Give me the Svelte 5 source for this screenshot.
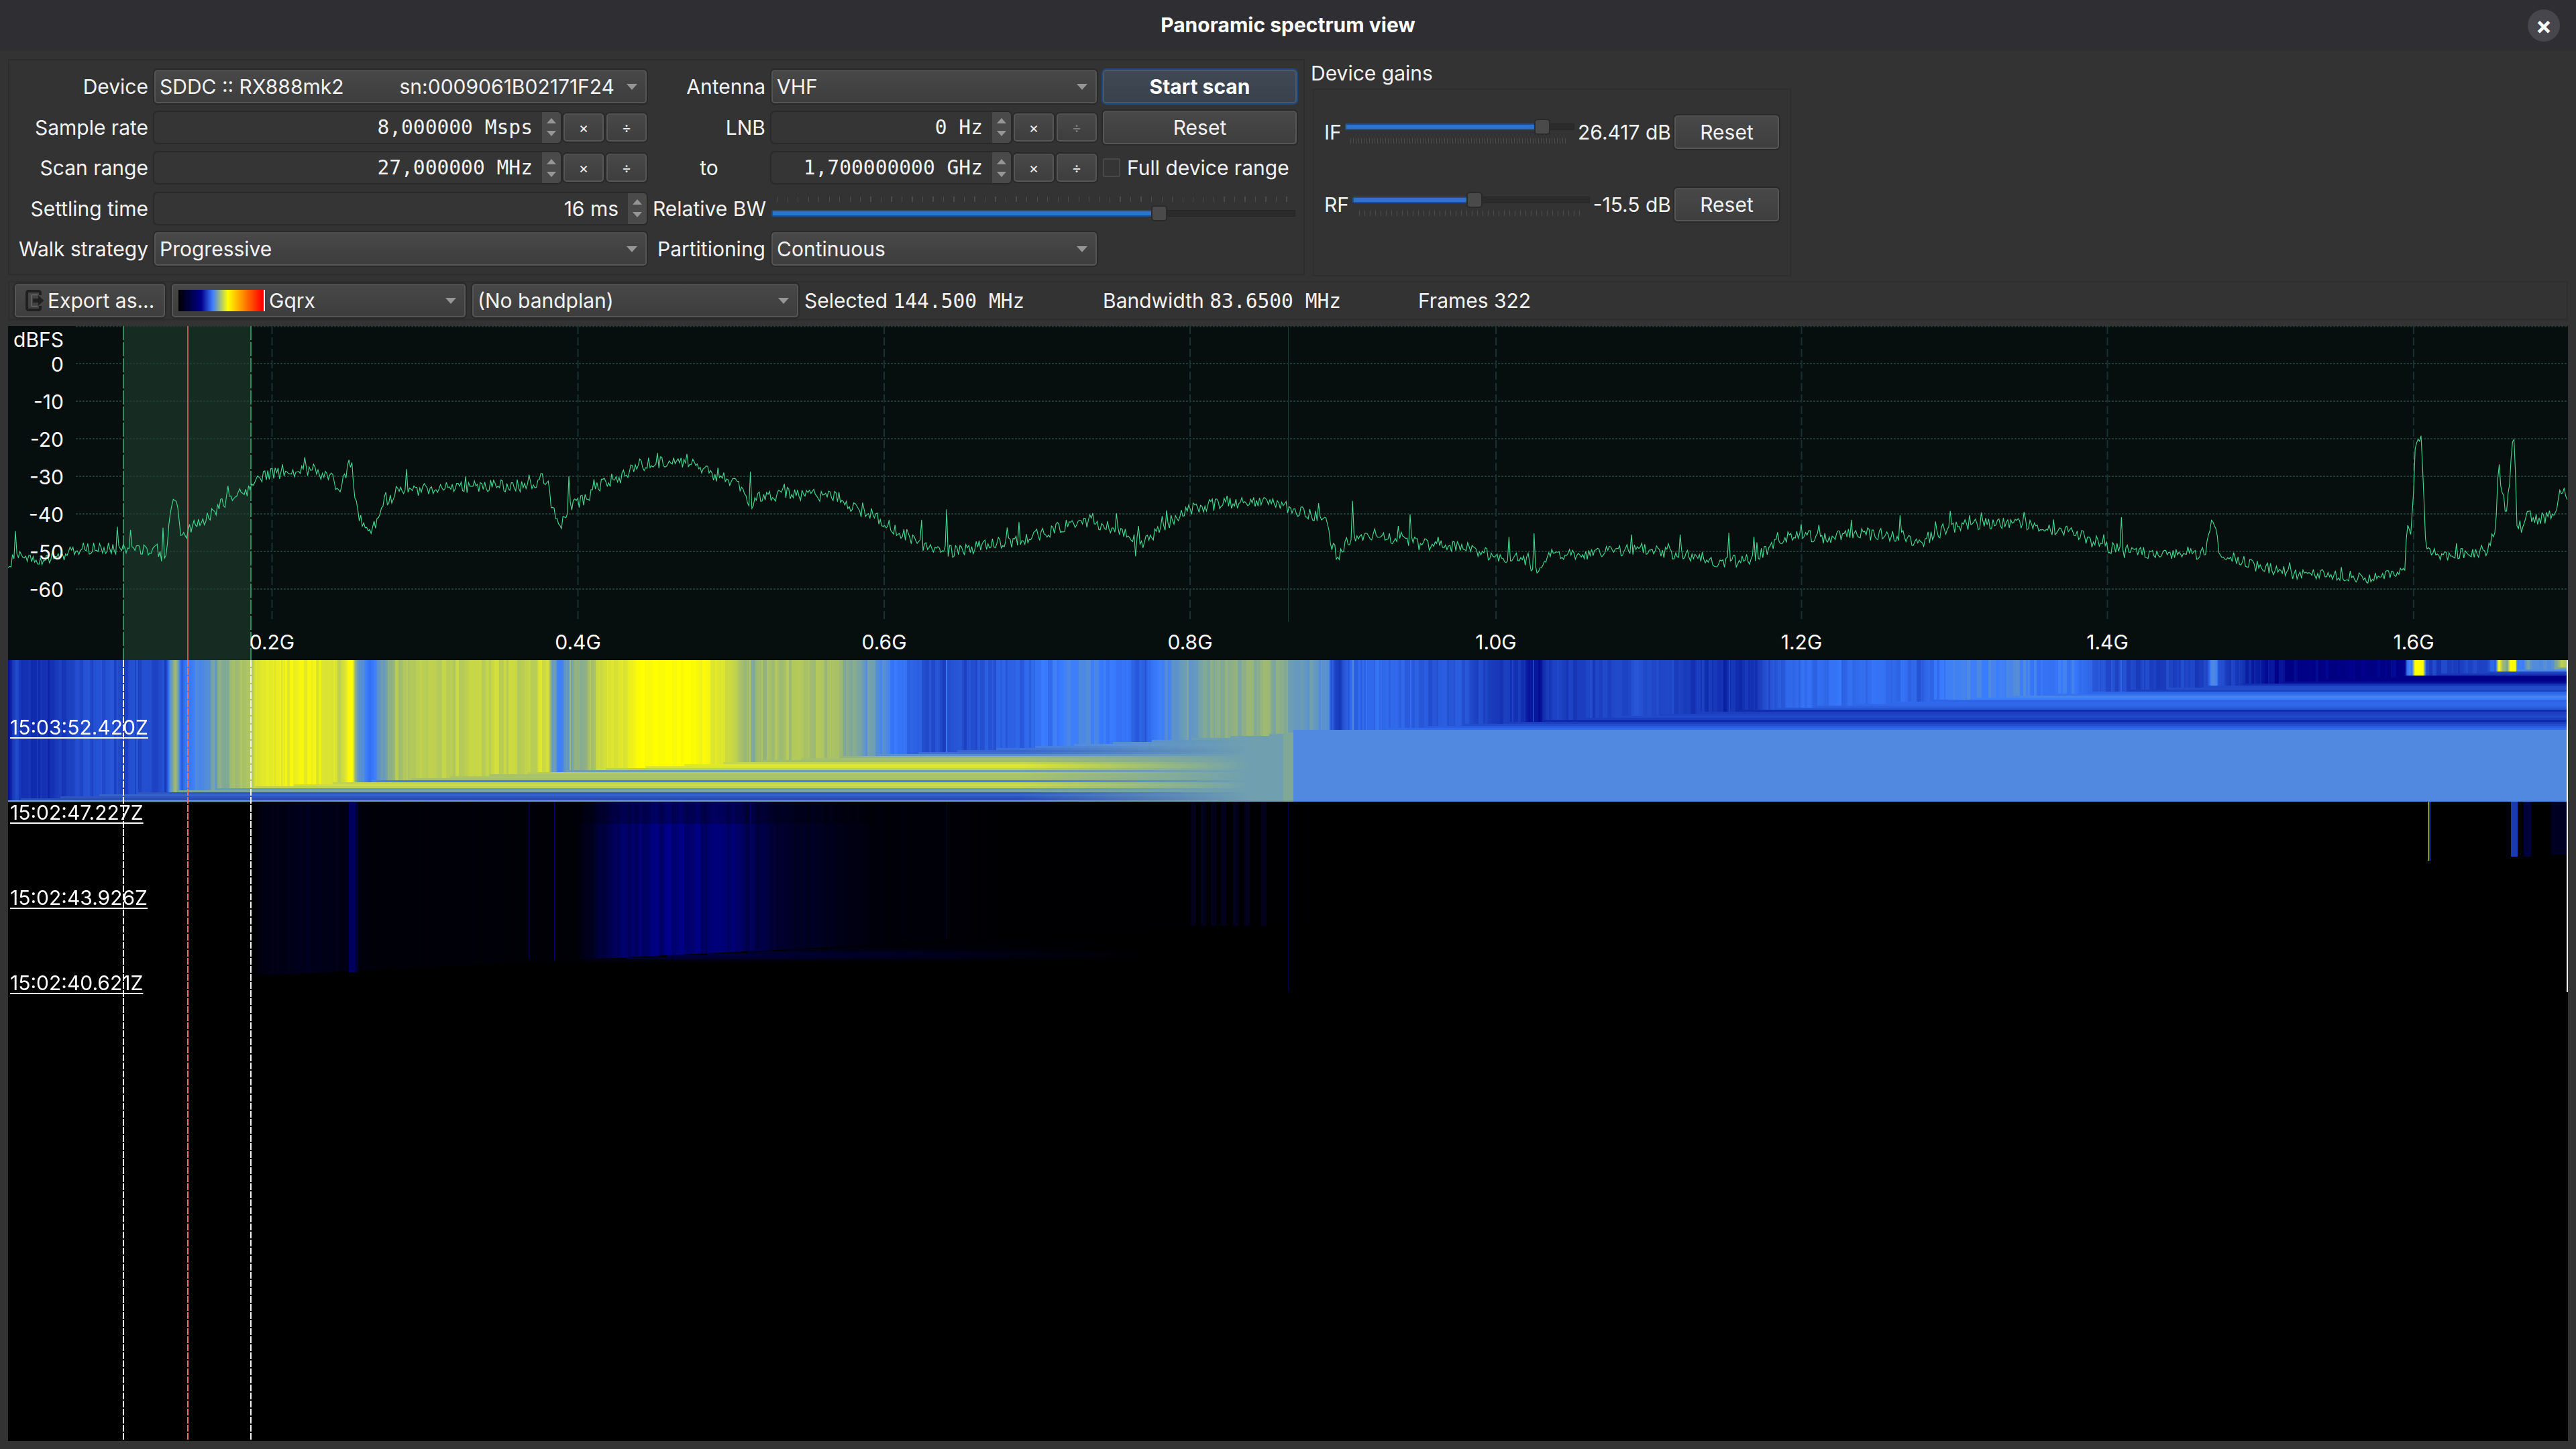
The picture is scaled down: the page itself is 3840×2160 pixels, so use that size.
<script lang="ts">
    import { onMount } from "svelte";

    let canvas: HTMLCanvasElement;

    // seeded, so the noise stays the same between runs
    function rng(seed: number) {
        return () => {
            seed = (seed + 0x6d2b79f5) | 0;
            let t = Math.imul(seed ^ (seed >>> 15), 1 | seed);
            t = (t + Math.imul(t ^ (t >>> 7), 61 | t)) ^ t;
            return ((t ^ (t >>> 14)) >>> 0) / 4294967296;
        };
    }

    const PLOT_L = 12;
    const PLOT_R = 3827;
    const PLOT_T = 486;
    const WF_T = 984;
    const WF_MID = 1195;
    const WF_B = 2148;

    const seg = (x0: number, sx: number, pts: number[][]) =>
        pts.map(([x, y]) => [x0 + x / sx, 480 + y / 3]);

    // rough outline of the power trace, full-size pixels
    const knots = [
        ...seg(0, 1.206, [
            [14, 1100], [28, 1040], [60, 1060], [90, 1070], [120, 1040], [150, 1010], [220, 1020], [280, 1020],
            [298, 1030], [306, 860], [315, 790], [320, 860], [326, 980], [340, 920], [370, 880], [400, 810],
            [430, 770], [452, 750], [465, 690], [500, 680], [540, 660], [580, 680], [600, 710], [610, 745],
            [625, 660], [633, 625], [638, 780], [645, 860], [665, 950], [680, 880], [695, 810], [710, 770],
            [730, 750], [780, 750], [850, 735], [900, 730], [960, 735], [975, 700], [985, 700], [990, 820],
            [1005, 910], [1015, 890], [1025, 830], [1050, 790], [1085, 720], [1120, 690], [1150, 640],
            [1185, 625], [1240, 625], [1280, 680], [1320, 720], [1340, 770], [1350, 810], [1365, 780],
            [1420, 770], [1460, 770], [1510, 790], [1540, 840],
        ]),
        ...seg(1300, 1.206, [
            [0, 860], [20, 890], [60, 960], [90, 1000], [130, 1030], [180, 1010], [220, 990], [260, 980],
            [300, 950], [350, 910], [400, 900], [440, 930], [470, 970], [490, 990], [520, 920], [560, 850],
            [600, 820], [650, 810], [700, 800], [750, 830], [800, 870], [820, 900], [825, 990], [840, 1060],
            [855, 980], [868, 960], [900, 950], [950, 975], [1000, 1000], [1060, 1000], [1110, 1040],
            [1170, 1055], [1190, 1105], [1200, 1110], [1220, 1040], [1260, 1040], [1310, 1030], [1370, 1015],
            [1430, 1030], [1480, 1050], [1530, 1075],
        ]),
        ...seg(2600, 1.2645, [
            [0, 1065], [30, 1040], [60, 990], [100, 950], [150, 965], [200, 945], [250, 950], [300, 960],
            [330, 985], [380, 925], [430, 905], [520, 900], [560, 930], [620, 925], [650, 980], [690, 1010],
            [730, 1035], [800, 1030], [870, 1035], [880, 900], [890, 900], [895, 1030], [920, 1050],
            [960, 1085], [1030, 1125], [1100, 1135], [1190, 1140], [1245, 1120], [1250, 920], [1258, 930],
            [1265, 580], [1276, 490], [1280, 700], [1285, 1020], [1300, 1040], [1350, 1040], [1400, 1020],
            [1408, 970], [1416, 960], [1422, 620], [1428, 770], [1438, 850], [1446, 600], [1452, 500],
            [1456, 910], [1468, 920], [1478, 810], [1485, 890], [1495, 880], [1525, 870], [1540, 745],
            [1552, 780],
        ]),
    ];

    // single-sample spikes that also leave a line in the waterfall
    const spikes = [
        ...seg(0, 1.206, [[28, 935], [210, 915], [236, 930], [292, 920], [732, 658], [1024, 690], [1182, 585], [1235, 590], [1348, 670]]),
        ...seg(1300, 1.206, [[88, 885], [133, 838], [264, 895], [397, 855], [440, 855], [529, 842], [864, 800], [968, 860], [1145, 960], [1189, 945], [1365, 950], [1454, 950], [1541, 942]]),
        ...seg(2600, 1.2645, [[18, 960], [64, 940], [108, 905], [203, 885], [295, 865], [388, 845], [527, 850], [710, 873], [1028, 1075]]),
    ];
    const spikeDips = [
        ...seg(0, 1.206, [[290, 1070], [1348, 872]]),
        ...seg(1300, 1.206, [[475, 1048]]),
    ];

    function base(x: number) {
        if (x <= knots[0][0]) return knots[0][1];
        for (let i = 1; i < knots.length; i++) {
            if (x <= knots[i][0]) {
                const [x0, y0] = knots[i - 1];
                const [x1, y1] = knots[i];
                return y0 + ((y1 - y0) * (x - x0)) / (x1 - x0);
            }
        }
        return knots[knots.length - 1][1];
    }

    function buildTrace() {
        const r = rng(11);
        const pts: string[] = [];
        const marks = [...spikes, ...spikeDips];
        for (let x = PLOT_L; x <= PLOT_R; x += 2.2) {
            let y = base(x) + (r() - 0.5) * 19;
            if (r() < 0.05) y -= r() * 16;
            const hit = marks.find((m) => Math.abs(m[0] - x) < 1.1);
            if (hit) y = hit[1];
            pts.push(`${x.toFixed(1)},${y.toFixed(1)}`);
        }
        return pts.join(" ");
    }
    const trace = buildTrace();

    const dbLines = [
        { label: "0", y: 542 },
        { label: "-10", y: 598 },
        { label: "-20", y: 654 },
        { label: "-30", y: 710 },
        { label: "-40", y: 766 },
        { label: "-50", y: 822 },
        { label: "-60", y: 878 },
    ];
    const freqLines = [
        { label: "0.2G", x: 405.5 },
        { label: "0.4G", x: 861.5 },
        { label: "0.6G", x: 1318 },
        { label: "0.8G", x: 1774 },
        { label: "1.0G", x: 2230 },
        { label: "1.2G", x: 2685.5 },
        { label: "1.4G", x: 3141.5 },
        { label: "1.6G", x: 3598 },
    ];
    const stamps = [
        { text: "15:03:52.420Z", y: 1067 },
        { text: "15:02:47.227Z", y: 1194 },
        { text: "15:02:43.926Z", y: 1321 },
        { text: "15:02:40.621Z", y: 1448 },
    ];

    type RGB = [number, number, number];
    const mix = (a: RGB, b: RGB, t: number): RGB => [
        a[0] + (b[0] - a[0]) * t,
        a[1] + (b[1] - a[1]) * t,
        a[2] + (b[2] - a[2]) * t,
    ];
    const css = (c: RGB) => `rgb(${c[0] | 0},${c[1] | 0},${c[2] | 0})`;

    // trace height on screen -> waterfall colour
    const stops: [number, RGB][] = [
        [688, [255, 255, 0]],
        [700, [244, 244, 24]],
        [722, [200, 216, 70]],
        [745, [150, 180, 125]],
        [760, [112, 160, 176]],
        [788, [58, 124, 255]],
        [822, [32, 72, 200]],
        [840, [14, 40, 170]],
        [855, [0, 0, 139]],
        [880, [0, 0, 110]],
    ];
    function colourAt(y: number): RGB {
        if (y <= stops[0][0]) return stops[0][1];
        for (let i = 1; i < stops.length; i++) {
            if (y <= stops[i][0]) {
                const t = (y - stops[i - 1][0]) / (stops[i][0] - stops[i - 1][0]);
                return mix(stops[i - 1][1], stops[i][1], t);
            }
        }
        return stops[stops.length - 1][1];
    }

    const SLOPE = 0.0516;
    const front = (x: number) => 1192 - (x - PLOT_L) * SLOPE;
    const frontInv = (y: number) => PLOT_L + (1192 - y) / SLOPE;

    // brightness of the older, dim sweep
    const dimKnots = [
        [374, 0], [392, 0.16], [470, 0.24], [525, 0.16], [560, 0.07], [860, 0.06], [880, 0.3], [930, 0.85],
        [1000, 1], [1100, 0.85], [1150, 0.42], [1250, 0.2], [1300, 0.1], [1500, 0.03], [1900, 0.02], [2100, 0],
    ];
    function dim(x: number) {
        for (let i = 1; i < dimKnots.length; i++) {
            if (x <= dimKnots[i][0]) {
                const [x0, y0] = dimKnots[i - 1];
                const [x1, y1] = dimKnots[i];
                return x < x0 ? 0 : y0 + ((y1 - y0) * (x - x0)) / (x1 - x0);
            }
        }
        return 0;
    }

    function drawWaterfall() {
        const ctx = canvas.getContext("2d")!;
        const r = rng(5);
        ctx.fillStyle = "#000";
        ctx.fillRect(0, 0, canvas.width, canvas.height);
        const rect = (x0: number, y0: number, x1: number, y1: number, c: RGB | string) => {
            ctx.fillStyle = typeof c === "string" ? c : css(c);
            ctx.fillRect(x0 - PLOT_L, y0 - WF_T, x1 - x0, y1 - y0);
        };

        // newest sweep: stripes above the slanted front
        const cols: RGB[] = [];
        let stripe = 0;
        let left = 0;
        for (let x = PLOT_L; x <= PLOT_R; x++) {
            if (left-- <= 0) {
                stripe = (r() - 0.5) * 15;
                left = 1 + Math.floor(r() * 6);
            }
            let v = base(x) + stripe;
            const hit = spikes.find((m) => Math.abs(m[0] - x) < 1);
            if (hit) v = Math.min(v, hit[1] + 30);
            cols.push(colourAt(v));
            rect(x, WF_T, x + 1, Math.round(front(x)) + 4, cols[x - PLOT_L]);
        }

        // below the front each row keeps the colour of where the front crossed it
        const faded: RGB = [112, 160, 176];
        for (let y = 995; y < WF_MID; y += 3) {
            const fx = Math.max(PLOT_L, Math.round(frontInv(y + 1)));
            const c = cols[Math.min(fx, PLOT_R) - PLOT_L];
            if (y < 1088) {
                rect(fx, y, PLOT_R + 1, y + 3, c);
                continue;
            }
            for (let x = fx; x < 1913; x += 6) {
                const t = Math.min(1, Math.max(0.22, (x - 1420) / 440));
                rect(x, y, x + 6, y + 3, mix(c, faded, t));
            }
        }
        rect(1913, 1092, 1928, WF_MID, "#7fa896");
        rect(1928, 1088, PLOT_R + 1, WF_MID, "#5289e0");
        rect(PLOT_L, 1193, 1913, WF_MID, "#6f9fb4");

        // older sweep, almost black
        const navy: RGB = [0, 0, 139];
        const low = (x: number) => 1455 - (x - 374) * 0.05;
        const black: RGB = [0, 0, 0];
        left = 0;
        for (let x = 374; x < 2100; x++) {
            if (left-- <= 0) {
                stripe = 0.72 + r() * 0.28;
                left = 1 + Math.floor(r() * 7);
            }
            const lv = dim(x) * stripe;
            const ylow = low(x);
            rect(x, WF_MID, x + 1, 1228, mix(black, navy, lv * (x > 860 && x < 1300 ? 0.75 : 1)));
            rect(x, 1228, x + 1, ylow, mix(black, navy, lv));
        }
        for (let y = 1400; y < 1435; y += 3) {
            const fx = 374 + (1455 - y) / 0.05;
            const c = dim(fx) * 0.45;
            for (let x = fx; x < 1720; x += 6) {
                const t = Math.max(0, 1 - (x - fx) / (1720 - fx));
                rect(x, y, x + 6, y + 3, mix(black, navy, c * t + 0.02 * t));
            }
        }

        // a few lone channels
        rect(520, WF_MID, 530, 1449, [0, 0, 92]);
        rect(530, WF_MID, 534, 1449, [0, 0, 50]);
        rect(788, WF_MID, 790, 1430, [0, 0, 70]);
        rect(826, WF_MID, 827, 1432, [0, 0, 110]);
        rect(1118, WF_MID, 1120, 1415, [0, 0, 110]);
        rect(1411, WF_MID, 1412, 1400, [0, 0, 80]);
        for (const sx of [1775, 1790, 1805, 1820, 1838, 1855, 1880]) {
            rect(sx, WF_MID, sx + 8, 1380, [2, 2, 28]);
        }
        rect(1920, WF_MID, 1921, 1478, [0, 0, 70]);
        rect(3620, WF_MID, 3621, 1283, "#c8d860");
        rect(3621, WF_MID, 3623, 1283, "#1a3ab0");
        rect(3743, WF_MID, 3753, 1277, "#1a3ab0");
        rect(3762, WF_MID, 3773, 1277, [0, 0, 60]);
        rect(3803, WF_MID, PLOT_R + 1, 1274, [0, 0, 34]);
        rect(PLOT_R - 1, WF_T, PLOT_R + 1, 1479, "#f4f4f4");
    }

    onMount(drawWaterfall);
</script>

{#snippet arrow()}
    <i class="arrow"></i>
{/snippet}

{#snippet spin(text: string, mono = true)}
    <div class="spin">
        <span class="value" class:mono>{text}</span>
        <div class="stepper">
            <i class="tri up"></i>
            <i class="tri"></i>
        </div>
    </div>
{/snippet}

{#snippet spinRow(text: string, divOff = false)}
    <div class="field">
        {@render spin(text)}
        <button class="btn small">×</button>
        <button class="btn small" class:off={divOff}>÷</button>
    </div>
{/snippet}

{#snippet slider(pct: number, ticks: string)}
    <div class="slider {ticks}">
        <div class="groove">
            <div class="fill" style="width: {pct}%"></div>
            <div class="handle" style="left: {pct}%"></div>
        </div>
        <div class="ticks"></div>
    </div>
{/snippet}

<div class="window">
    <header class="titlebar">
        <span class="title">Panoramic spectrum view</span>
        <button class="close">×</button>
    </header>

    <div class="content">
        <div class="top">
            <section class="form">
                <label>Device</label>
                <div class="combo">
                    <span>SDDC :: RX888mk2</span>
                    <span class="serial">sn:0009061B02171F24</span>
                    {@render arrow()}
                </div>
                <label>Antenna</label>
                <div class="combo"><span>VHF</span>{@render arrow()}</div>
                <button class="btn primary">Start scan</button>

                <label>Sample rate</label>
                {@render spinRow("8,000000 Msps")}
                <label>LNB</label>
                {@render spinRow("0 Hz", true)}
                <button class="btn">Reset</button>

                <label>Scan range</label>
                {@render spinRow("27,000000 MHz")}
                <label class="center">to</label>
                {@render spinRow("1,700000000 GHz")}
                <div class="check"><i class="box"></i>Full device range</div>

                <label>Settling time</label>
                {@render spin("16 ms", false)}
                <label>Relative BW</label>
                <div class="wide">{@render slider(74, "ticks-top")}</div>

                <label>Walk strategy</label>
                <div class="combo"><span>Progressive</span>{@render arrow()}</div>
                <label>Partitioning</label>
                <div class="combo"><span>Continuous</span>{@render arrow()}</div>
            </section>

            <section class="gains">
                <div class="gains-title">Device gains</div>
                <div class="gains-frame">
                    <div class="gain">
                        <span>IF</span>
                        {@render slider(86, "ticks-fine")}
                        <span class="db">26.417 dB</span>
                        <button class="btn reset">Reset</button>
                    </div>
                    <div class="gain">
                        <span>RF</span>
                        {@render slider(51.5, "ticks-mid")}
                        <span class="db">-15.5 dB</span>
                        <button class="btn reset">Reset</button>
                    </div>
                </div>
            </section>
        </div>

        <div class="toolbar">
            <button class="btn export">
                <svg viewBox="0 0 28 32" width="28" height="32">
                    <path d="M22 8V4.500A2.500 2.500 0 0 0 19.500 2h-15A2.500 2.500 0 0 0 2 4.500v23A2.500 2.500 0 0 0 4.500 30h15a2.500 2.500 0 0 0 2.500-2.500V24" fill="none" stroke="#1f1f1f" stroke-width="4" />
                    <path d="M9 7.500h9M9 24.500h9M9 7.500v17" fill="none" stroke="#666" stroke-width="1.500" />
                    <path d="M11 13h8V8.500L27.500 16 19 23.500V19h-8z" fill="#1f1f1f" />
                </svg>
                Export as...
            </button>
            <div class="combo palette">
                <i class="ramp"></i><span>Gqrx</span>{@render arrow()}
            </div>
            <div class="combo bandplan"><span>(No bandplan)</span>{@render arrow()}</div>
            <div class="stat selected">Selected <span class="mono">144.500 MHz</span></div>
            <div class="stat bandwidth">Bandwidth <span class="mono">83.6500 MHz</span></div>
            <div class="stat frames">Frames 322</div>
        </div>

        <div class="plot">
            <svg class="spectrum" viewBox="12 486 3816 498" width="3816" height="498">
                <rect x="184" y="486" width="190" height="498" fill="#162c22" />
                <line x1="113" y1="486.500" x2="3828" y2="486.500" class="grid-h" />
                {#each dbLines as d}
                    <line x1="113" y1={d.y} x2="3828" y2={d.y} class="grid-h" />
                {/each}
                {#each freqLines as f}
                    <line x1={f.x} y1="486" x2={f.x} y2="927" class="grid-v" />
                {/each}
                <line x1="1920.500" y1="486" x2="1920.500" y2="927" stroke="#1b3a36" stroke-width="1" />
                <line x1="184" y1="486" x2="184" y2="984" class="edge" />
                <line x1="374" y1="486" x2="374" y2="984" class="edge" />
                <line x1="280" y1="486" x2="280" y2="984" stroke="#f07068" stroke-width="1.500" />
                <polyline points={trace} fill="none" stroke="#40d890" stroke-width="1.150" />
            </svg>
            <canvas bind:this={canvas} class="waterfall" width="3816" height={WF_B - WF_T}></canvas>
            <svg class="cursors" viewBox="12 984 3816 1164" width="3816" height="1164">
                <line x1="184" y1="984" x2="184" y2="2148" class="cut" />
                <line x1="374" y1="984" x2="374" y2="2148" class="cut" />
                <line x1="280" y1="984" x2="280" y2="2148" class="cut red" />
            </svg>

            <span class="axis-unit">dBFS</span>
            {#each dbLines as d}
                <span class="axis-y" style="top: {d.y - PLOT_T - 16}px">{d.label}</span>
            {/each}
            {#each freqLines as f}
                <span class="axis-x" style="left: {f.x - PLOT_L}px">{f.label}</span>
            {/each}
            {#each stamps as s}
                <span class="stamp" style="top: {s.y - PLOT_T}px">{s.text}</span>
            {/each}
        </div>
    </div>
</div>

<style>
    :global(body) {
        margin: 0;
        background: #333333;
    }

    .window {
        width: 3840px;
        height: 2160px;
        display: flex;
        flex-direction: column;
        overflow: hidden;
        background: #333333;
        color: #f2f2f2;
        font-family: Inter, "Noto Sans", sans-serif;
        font-size: 30px;
    }

    /* Title bar. */
    .titlebar {
        position: relative;
        flex: none;
        box-sizing: border-box;
        height: 76px;
        padding-bottom: 2px;
        display: flex;
        align-items: center;
        justify-content: center;
        background: #2f2f33;
    }
    .title {
        font-weight: 700;
        color: #fff;
    }
    .close {
        position: absolute;
        right: 24px;
        top: 14px;
        width: 48px;
        height: 48px;
        padding: 0;
        border: 0;
        border-radius: 50%;
        background: #46464c;
        color: #fff;
        font: 700 36px/46px Inter, sans-serif;
    }

    .content {
        flex: 1;
        min-height: 0;
        display: flex;
        flex-direction: column;
        padding: 12px 12px 12px;
    }

    .top {
        flex: none;
        display: flex;
        height: 322px;
        gap: 8px;
    }

    /* Main parameter form. */
    .form {
        width: 1933px;
        box-sizing: border-box;
        border: 2px solid #2c2c2c;
        display: grid;
        grid-template-columns: 207px 734px 168px 485px 289px;
        grid-auto-rows: 60.5px;
        column-gap: 9px;
        align-items: center;
        padding-top: 9px;
    }
    label {
        text-align: right;
        white-space: nowrap;
    }
    label.center {
        text-align: center;
        padding-left: 0;
    }

    .field {
        display: flex;
        align-items: center;
        gap: 4px;
    }
    .wide {
        grid-column: span 2;
        margin-top: -6px;
    }

    .combo {
        box-sizing: border-box;
        height: 50px;
        display: flex;
        align-items: center;
        padding: 0 12px 0 6px;
        border: 2px solid #555555;
        border-top-color: #4f4f4f;
        border-radius: 5px;
        background: linear-gradient(#484848, #3d3d3d);
        box-shadow: 0 0 0 2px #292929;
        white-space: nowrap;
    }
    .serial {
        margin-left: auto;
        margin-right: 18px;
    }
    .arrow {
        margin-left: auto;
        width: 0;
        height: 0;
        border-left: 8px solid transparent;
        border-right: 8px solid transparent;
        border-top: 9px solid #969696;
    }
    .serial + .arrow {
        margin-left: 0;
    }

    .spin {
        flex: 1;
        box-sizing: border-box;
        height: 46px;
        display: flex;
        align-items: stretch;
        border-radius: 5px;
        background: #353535;
        box-shadow: 0 0 0 2px #292929;
    }
    .value {
        flex: 1;
        display: flex;
        align-items: center;
        justify-content: flex-end;
        padding-right: 14px;
        white-space: pre;
    }
    .mono {
        font-family: "DejaVu Sans Mono", monospace;
        font-size: 29.600px;
        white-space: pre;
    }
    .stepper {
        width: 28px;
        flex: none;
        display: flex;
        flex-direction: column;
        align-items: center;
        justify-content: center;
        gap: 11px;
        background: #4a4a4a;
        border-radius: 0 5px 5px 0;
    }
    .tri {
        width: 0;
        height: 0;
        border-left: 7px solid transparent;
        border-right: 7px solid transparent;
        border-top: 8px solid #969696;
    }
    .tri.up {
        border-top: 0;
        border-bottom: 8px solid #969696;
    }

    .btn {
        box-sizing: border-box;
        height: 50px;
        padding: 0;
        border: 2px solid #565656;
        border-top-color: #4f4f4f;
        border-radius: 5px;
        background: linear-gradient(#484848, #3e3e3e);
        box-shadow: 0 0 0 2px #292929;
        color: inherit;
        font: inherit;
    }
    .btn.small {
        flex: none;
        width: 60px;
        height: 42px;
        font-size: 22px;
    }
    .btn.off {
        color: #808080;
    }
    .btn.primary {
        height: 50px;
        font-weight: 700;
        color: #fff;
        background: linear-gradient(#404853, #38414c);
        border-color: #4d5866;
        box-shadow: 0 0 0 2px #1c4a80;
    }

    .check {
        display: flex;
        align-items: center;
        gap: 10px;
        white-space: nowrap;
    }
    .box {
        width: 22px;
        height: 24px;
        border: 2px solid #484848;
        background: #353535;
        border-radius: 2px;
    }

    /* Sliders. */
    .slider {
        display: flex;
        flex-direction: column;
        flex: 1;
        min-width: 0;
    }
    .groove {
        position: relative;
        height: 10px;
        background: #2b2b2b;
        border-radius: 2px;
        box-shadow: inset 0 0 0 1px #262626;
    }
    .fill {
        height: 100%;
        box-sizing: border-box;
        background: #2e72cf;
        border: 2px solid #234d86;
        border-radius: 2px;
    }
    .handle {
        position: absolute;
        top: -7px;
        box-sizing: border-box;
        width: 24px;
        height: 24px;
        margin-left: -12px;
        background: #4a4a4a;
        border: 2px solid #2a2a2a;
        border-radius: 5px;
    }
    .ticks {
        height: 8px;
        margin: 12px 12px 0 8px;
        background: repeating-linear-gradient(to right, #4c4c4c 0 1px, transparent 1px 4px);
    }
    .ticks-mid .ticks {
        margin: 11px 12px 0 10px;
        background: repeating-linear-gradient(to right, #4c4c4c 0 1px, transparent 1px 8px);
    }
    .ticks-top {
        flex-direction: column-reverse;
        width: 781px;
    }
    .ticks-top .ticks {
        margin: 0 12px 12px 8px;
        background: repeating-linear-gradient(to right, #4c4c4c 0 1px, transparent 1px 15.500px);
    }

    /* Device gains. */
    .gains {
        width: 716px;
        margin-left: 1px;
    }
    .gains-title {
        height: 44px;
        line-height: 42px;
    }
    .gains-frame {
        box-sizing: border-box;
        width: 713px;
        height: 280px;
        margin-left: 3px;
        border: 2px solid #2e2e2e;
        padding: 38px 16px 0 15px;
        display: flex;
        flex-direction: column;
        gap: 58px;
    }
    .gain {
        display: flex;
        align-items: center;
        gap: 5px;
        height: 50px;
    }
    .gain .slider {
        margin-top: 4px;
    }
    .db {
        white-space: nowrap;
    }
    .btn.reset {
        width: 156px;
        flex: none;
    }

    /* Toolbar under the form. */
    .toolbar {
        flex: none;
        box-sizing: border-box;
        height: 59px;
        margin-top: 9px;
        display: flex;
        align-items: center;
        padding: 0 0 0 8px;
        border: 2px solid #2e2e2e;
        border-bottom-width: 3px;
        white-space: nowrap;
    }
    .export {
        width: 224px;
        display: flex;
        align-items: center;
        gap: 5px;
        padding-left: 14px;
    }
    .palette {
        width: 438px;
        margin-left: 10px;
        padding-left: 8px;
    }
    .ramp {
        width: 127px;
        height: 32px;
        margin-right: 6px;
        background: linear-gradient(to right, #000 0%, #00008b 27%, #3d7cff 40%, #ffff00 58%, #ff8a00 76%, #ff0000 98%);
        border-right: 2px solid #fff;
    }
    .bandplan {
        width: 486px;
        margin-left: 10px;
    }
    .stat {
        white-space: pre;
    }
    .selected {
        margin-left: 9px;
        width: 445px;
    }
    .bandwidth {
        width: 470px;
    }

    /* Spectrum + waterfall: a free canvas, labels sit on top. */
    .plot {
        position: relative;
        flex: 1;
        margin-top: 8px;
        width: 3816px;
        background: #070e0e;
        overflow: hidden;
    }
    .spectrum,
    .waterfall,
    .cursors {
        position: absolute;
        left: 0;
        display: block;
    }
    .spectrum {
        top: 0;
    }
    .waterfall {
        top: 498px;
    }
    .cursors {
        top: 498px;
    }
    .grid-h {
        stroke: #1d3a35;
        stroke-width: 2;
        stroke-dasharray: 3 2;
    }
    .grid-v {
        stroke: #17332f;
        stroke-width: 2;
        stroke-dasharray: 12 5;
    }
    .edge {
        stroke: #2f8a5e;
        stroke-width: 2;
        stroke-dasharray: 21 3;
    }
    .cut {
        stroke: #f4f4f4;
        stroke-width: 2;
        stroke-dasharray: 10 2;
    }
    .cut.red {
        stroke: #f07068;
    }
    .axis-unit,
    .axis-y,
    .axis-x,
    .stamp {
        position: absolute;
        color: #fff;
        line-height: 34px;
        white-space: nowrap;
    }
    .axis-unit {
        right: calc(100% - 83px);
        top: 3px;
    }
    .axis-y {
        right: calc(100% - 83px);
    }
    .axis-x {
        top: 454px;
        transform: translateX(-50%);
    }
    .stamp {
        left: 3px;
        text-decoration: underline;
        text-decoration-thickness: 2px;
        text-underline-offset: 4px;
    }
</style>
